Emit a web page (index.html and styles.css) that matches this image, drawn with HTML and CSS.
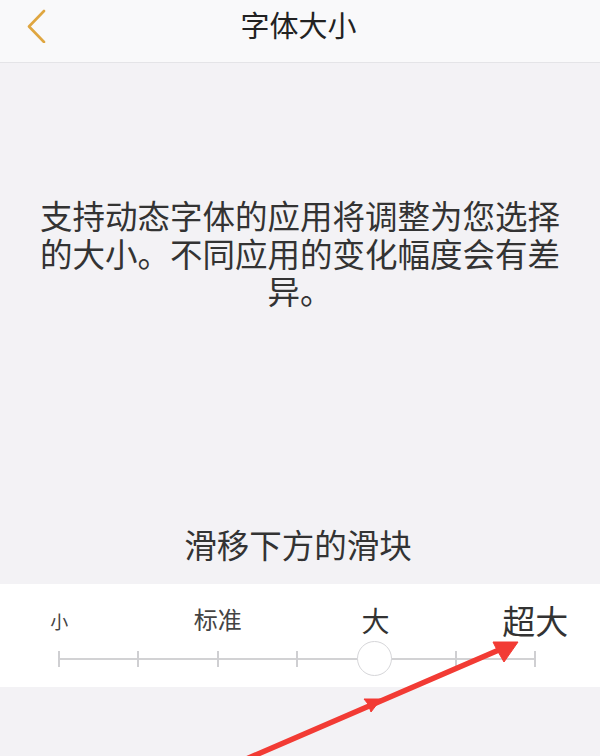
FILE: index.html
```html
<!DOCTYPE html>
<html lang="zh-CN">
<head>
<meta charset="utf-8">
<title>字体大小</title>
<link rel="stylesheet" href="styles.css">
</head>
<body>
<div class="page">
  <header class="nav">
    <div class="nav-back">
      <svg width="20" height="34" viewBox="0 0 20 34" aria-hidden="true">
        <polyline points="17,2 2,17.5 17,33" fill="none" stroke="#dfa640" stroke-width="2.6" stroke-linecap="round" stroke-linejoin="round"/>
      </svg>
    </div>
    <h1 class="nav-title">字体大小</h1>
    <div class="nav-side"></div>
  </header>

  <p class="desc">支持动态字体的应用将调整为您选择的大小。不同应用的变化幅度会有差异。</p>

  <p class="hint">滑移下方的滑块</p>

  <section class="slider">
    <div class="slider-labels">
      <span class="lbl lbl-s">小</span>
      <span></span>
      <span class="lbl lbl-m">标准</span>
      <span></span>
      <span class="lbl lbl-l">大</span>
      <span></span>
      <span class="lbl lbl-xl">超大</span>
    </div>
    <div class="slider-track">
      <span class="tick"></span>
      <span class="tick"></span>
      <span class="tick"></span>
      <span class="tick"></span>
      <span class="stop"><span class="thumb"></span></span>
      <span class="tick"></span>
      <span class="tick"></span>
    </div>
  </section>

  <div class="rest"></div>

  <!-- red pointer drawn on top of the slider -->
  <svg class="pointer" width="600" height="756" viewBox="0 0 600 756" aria-hidden="true">
    <g fill="#f23b34" stroke="#f23b34" stroke-linejoin="round">
      <line x1="244" y1="760" x2="500" y2="649.5" stroke-width="5.5" stroke-linecap="round"/>
      <polygon points="518,642 493,642 497,650 504,662" stroke-width="1"/>
      <polygon points="381,699 364,699 368,704 371,712" stroke-width="1"/>
    </g>
  </svg>
</div>
</body>
</html>
```

FILE: styles.css
```css
* {
  box-sizing: border-box;
}

html, body {
  margin: 0;
  padding: 0;
}

body {
  font-family: "Noto Sans CJK SC", "Noto Sans", "Liberation Sans", sans-serif;
  color: #333;
}

.page {
  position: relative;
  width: 600px;
  height: 756px;
  overflow: hidden;
  display: flex;
  flex-direction: column;
  background: #f3f2f5;
}

/* navigation bar */
.nav {
  flex: none;
  height: 63px;
  display: grid;
  grid-template-columns: 80px 1fr 80px;
  align-items: center;
  background: #f9f9fa;
  border-bottom: 1px solid #e4e4e7;
}

.nav-back {
  padding-left: 27px;
  height: 34px;
  margin-top: -10px;
}

.nav-back svg {
  display: block;
}

.nav-title {
  margin: 0;
  text-align: center;
  font-size: 29px;
  font-weight: 400;
  line-height: 40px;
  color: #222;
  margin-top: -14px;
  padding-right: 3px;
}

/* explanation text */
.desc {
  margin: 133px 0 0;
  padding: 0 25px;
  text-align: center;
  font-size: 32.5px;
  line-height: 37.5px;
  color: #333;
}

.hint {
  margin: 215px 0 0;
  text-align: center;
  font-size: 32.5px;
  line-height: 40px;
  color: #333;
  padding-right: 4px;
}

/* size slider */
.slider {
  flex: none;
  margin-top: 20px;
  height: 103px;
  background: #fff;
  padding: 16px 25px 0 19.5px;
}

.slider-labels,
.slider-track {
  display: grid;
  grid-template-columns: repeat(7, 79.33px);
}

.slider-labels {
  height: 40px;
  align-items: center;
  justify-items: center;
}

.lbl {
  white-space: nowrap;
  line-height: 1;
}

.lbl-s {
  font-size: 18px;
  color: #444;
  margin-top: 2px;
}

.lbl-m {
  font-size: 24px;
  color: #444;
  margin-top: -2px;
}

.lbl-l {
  font-size: 28px;
  color: #333;
  margin-left: -2px;
}

.lbl-xl {
  font-size: 33px;
  color: #333;
  margin-top: 2px;
}

.slider-track {
  height: 38px;
  align-items: center;
  justify-items: center;
  background: linear-gradient(#d2d2d4, #d2d2d4) no-repeat center / calc(100% - 79.33px) 2px;
}

.tick {
  width: 2px;
  height: 16px;
  background: #cfcfd2;
}

.stop {
  display: flex;
  align-items: center;
  justify-content: center;
  margin-left: -4px;
}

.thumb {
  width: 35px;
  height: 35px;
  border-radius: 50%;
  background: #fff;
  border: 1.5px solid #d6d6d9;
}

.rest {
  flex: 1;
}

.pointer {
  position: absolute;
  left: 0;
  top: 0;
  pointer-events: none;
}
```
